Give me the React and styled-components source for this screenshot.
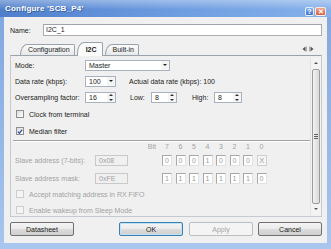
import React from "react";
import styled, { createGlobalStyle, css } from "styled-components";

const GlobalStyle = createGlobalStyle`
  html, body {
    margin: 0;
    padding: 0;
    width: 331px;
    height: 249px;
    overflow: hidden;
  }
  body {
    font-family: "Liberation Sans", Arial, sans-serif;
    font-size: 7px;
    color: #1c1c1c;
  }
`;

const BIT_NUMBERS = ["7", "6", "5", "4", "3", "2", "1", "0"];
const ADDRESS_BITS = ["0", "0", "0", "1", "0", "0", "0", "X"];
const MASK_BITS = ["1", "1", "1", "1", "1", "1", "1", "0"];

const CheckMark = () => (
  <svg width="7" height="7" viewBox="0 0 7 7">
    <path d="M1 3.6 L2.8 5.5 L6 1.2" fill="none" stroke="#2c4f9e" strokeWidth="1.4" />
  </svg>
);

const TabArrows = () => (
  <svg width="12" height="6" viewBox="0 0 12 6">
    <path d="M0.5 3 L3.5 0.5 L3.5 5.5 Z" fill="#555" />
    <rect x="4" y="0.5" width="0.8" height="5" fill="#999" />
    <path d="M11.5 3 L8.5 0.5 L8.5 5.5 Z" fill="#555" />
    <rect x="7.2" y="0.5" width="0.8" height="5" fill="#999" />
  </svg>
);

const Checkbox = ({ checked, disabled, children, mt }) => (
  <CheckRow $mt={mt} $disabled={disabled}>
    <Box $disabled={disabled}>{checked && <CheckMark />}</Box>
    {children}
  </CheckRow>
);

const BitCells = ({ values, header }) => (
  <Bits>
    {values.map((v, i) =>
      header ? (
        <BitNumber key={i}>{v}</BitNumber>
      ) : (
        <BitCell key={i} $muted={v === "X"}>
          {v}
        </BitCell>
      )
    )}
  </Bits>
);

const App = () => {
  return (
    <>
      <GlobalStyle />
      <Window>
        <TitleBar>
          <Title>Configure 'SCB_P4'</Title>
          <CaptionButtons>
            <CaptionButton>?</CaptionButton>
            <CaptionButton $close>✕</CaptionButton>
          </CaptionButtons>
        </TitleBar>
        <Frame>
          <Body>
            <NameRow>
              <NameLabel>Name:</NameLabel>
              <TextBox>I2C_1</TextBox>
            </NameRow>

            <TabStrip>
              <Tab>Configuration</Tab>
              <Tab $active>I2C</Tab>
              <Tab>Built-in</Tab>
              <TabScroll>
                <TabArrows />
              </TabScroll>
            </TabStrip>

            <Panel>
              <PanelContent>
                <FieldRow>
                  <FieldLabel>Mode:</FieldLabel>
                  <Select $width={85}>
                    Master
                    <DropButton />
                  </Select>
                </FieldRow>
                <FieldRow $mt={5}>
                  <FieldLabel>Data rate (kbps):</FieldLabel>
                  <Select $width={31}>
                    100
                    <DropButton />
                  </Select>
                  <InlineText $ml={13}>Actual data rate (kbps): 100</InlineText>
                </FieldRow>
                <FieldRow $mt={5}>
                  <FieldLabel>Oversampling factor:</FieldLabel>
                  <Spin $width={31}>
                    16
                    <SpinButtons />
                  </Spin>
                  <InlineText $ml={14} $width={21}>
                    Low:
                  </InlineText>
                  <Spin $width={26}>
                    8
                    <SpinButtons />
                  </Spin>
                  <InlineText $ml={15} $width={22}>
                    High:
                  </InlineText>
                  <Spin $width={28}>
                    8
                    <SpinButtons />
                  </Spin>
                </FieldRow>

                <Checkbox mt={7}>Clock from terminal</Checkbox>
                <Checkbox mt={9} checked>
                  Median filter
                </Checkbox>

                <Separator />

                <BitHeader>
                  <BitCaption>Bit</BitCaption>
                  <BitCells values={BIT_NUMBERS} header />
                </BitHeader>
                <BitRow $mt={5}>
                  <DisabledLabel>Slave address (7-bits):</DisabledLabel>
                  <DisabledInput>0x08</DisabledInput>
                  <BitCells values={ADDRESS_BITS} />
                </BitRow>
                <BitRow $mt={7}>
                  <DisabledLabel>Slave address mask:</DisabledLabel>
                  <DisabledInput>0xFE</DisabledInput>
                  <BitCells values={MASK_BITS} />
                </BitRow>

                <Checkbox mt={6} disabled>
                  Accept matching address in RX FIFO
                </Checkbox>
                <Checkbox mt={8} disabled>
                  Enable wakeup from Sleep Mode
                </Checkbox>
              </PanelContent>

              <ScrollBar>
                <ScrollArrow $up />
                <ScrollThumb>
                  <Grip />
                </ScrollThumb>
                <ScrollArrow />
              </ScrollBar>
            </Panel>

            <ButtonRow>
              <Button>Datasheet</Button>
              <Spacer />
              <Button $default>OK</Button>
              <Button disabled>Apply</Button>
              <Button>Cancel</Button>
            </ButtonRow>
          </Body>
        </Frame>
      </Window>
    </>
  );
};

const Window = styled.div`
  width: 331px;
  height: 249px;
  display: flex;
  flex-direction: column;
  background: linear-gradient(to bottom, #7ea6df, #a8c6ee);
`;

const TitleBar = styled.div`
  height: 17px;
  flex: none;
  display: flex;
  justify-content: space-between;
  padding: 0 5px 0 5px;
  background: linear-gradient(
      to bottom,
      rgba(255, 255, 255, 0.35) 0%,
      rgba(255, 255, 255, 0.08) 45%,
      rgba(0, 0, 0, 0) 55%
    ),
    linear-gradient(to right, #4f7fcb 0%, #6c9be0 50%, #86b1ea 100%);
`;

const Title = styled.div`
  font-size: 8px;
  font-weight: bold;
  color: #fff;
  line-height: 17px;
  letter-spacing: 0.2px;
  text-shadow: 1px 1px 0 rgba(20, 40, 90, 0.45);
`;

const CaptionButtons = styled.div`
  display: flex;
  align-items: flex-end;
  gap: 1px;
  padding-bottom: 1px;
`;

const CaptionButton = styled.div`
  width: ${p => (p.$close ? 11 : 9)}px;
  height: 9px;
  box-sizing: border-box;
  border: 1px solid rgba(255, 255, 255, 0.85);
  border-radius: 2px;
  display: flex;
  align-items: center;
  justify-content: center;
  color: #fff;
  font-size: 7px;
  font-weight: bold;
  background: ${p =>
    p.$close
      ? "linear-gradient(to bottom, #f0a892, #d65a3d)"
      : "linear-gradient(to bottom, #8cb6f0, #3d72cf)"};
`;

const Frame = styled.div`
  flex: 1;
  display: flex;
  padding: 0 4px 6px 4px;
`;

const Body = styled.div`
  flex: 1;
  display: flex;
  flex-direction: column;
  background: #f0f0f0;
  padding: 7px 5px 7px 6px;
`;

const NameRow = styled.div`
  display: flex;
  align-items: center;
  height: 12px;
`;

const NameLabel = styled.div`
  width: 33px;
`;

const TextBox = styled.div`
  flex: 1;
  height: 12px;
  box-sizing: border-box;
  border: 1px solid #abadb3;
  border-top-color: #9ea3ab;
  background: #fff;
  padding-left: 2px;
  line-height: 10px;
`;

const TabStrip = styled.div`
  margin-top: 6px;
  height: 13px;
  display: flex;
  align-items: flex-end;
  padding-left: 10px;
  gap: 2px;
`;

const Tab = styled.div`
  height: 11px;
  box-sizing: border-box;
  border: 1px solid #9aa3ab;
  border-bottom: none;
  border-radius: 7px 2px 0 0 / 11px 2px 0 0;
  padding: 0 4px 0 7px;
  line-height: 10px;
  background: linear-gradient(to bottom, #fbfbfb, #e7e8ea);
  ${p =>
    p.$active &&
    css`
      height: 14px;
      margin-bottom: -1px;
      background: #fbfbfb;
      font-weight: bold;
      line-height: 13px;
      padding: 0 5px 0 8px;
      position: relative;
      z-index: 1;
    `}
`;

const TabScroll = styled.div`
  margin-left: auto;
  margin-right: 8px;
  align-self: center;
  display: flex;
`;

const Panel = styled.div`
  height: 162px;
  box-sizing: border-box;
  display: flex;
  border: 1px solid #c4cad0;
  border-top-color: #9aa3ab;
  background: #f0f0f0;
`;

const PanelContent = styled.div`
  flex: 1;
  display: flex;
  flex-direction: column;
  padding: 4px 0 0 4px;
`;

const FieldRow = styled.div`
  display: flex;
  align-items: center;
  height: 11px;
  margin-top: ${p => p.$mt || 0}px;
`;

const FieldLabel = styled.div`
  width: 70px;
  flex: none;
`;

const InlineText = styled.div`
  margin-left: ${p => p.$ml}px;
  width: ${p => (p.$width ? `${p.$width}px` : "auto")};
  white-space: nowrap;
`;

const fieldBox = css`
  position: relative;
  width: ${p => p.$width}px;
  height: 11px;
  box-sizing: border-box;
  border: 1px solid #a9b3bf;
  background: #fff;
  padding-left: 3px;
  line-height: 9px;
`;

const Select = styled.div`
  ${fieldBox}
`;

const Spin = styled.div`
  ${fieldBox}
`;

const DropButton = styled.span`
  position: absolute;
  right: 0;
  top: 0;
  bottom: 0;
  width: 8px;
  background: #f4f4f4;
  &::after {
    content: "";
    position: absolute;
    left: 2px;
    top: 3px;
    border-left: 2px solid transparent;
    border-right: 2px solid transparent;
    border-top: 2px solid #222;
  }
`;

const SpinButtons = styled.span`
  position: absolute;
  right: 0;
  top: 0;
  bottom: 0;
  width: 8px;
  background: #f4f4f4;
  &::before,
  &::after {
    content: "";
    position: absolute;
    left: 2px;
    border-left: 2px solid transparent;
    border-right: 2px solid transparent;
  }
  &::before {
    top: 1px;
    border-bottom: 2px solid #333;
  }
  &::after {
    bottom: 1px;
    border-top: 2px solid #333;
  }
`;

const CheckRow = styled.div`
  display: flex;
  align-items: center;
  gap: 5px;
  height: 8px;
  margin-top: ${p => p.$mt}px;
  padding-left: 1px;
  color: ${p => (p.$disabled ? "#a2a2a2" : "inherit")};
`;

const Box = styled.span`
  width: 8px;
  height: 8px;
  box-sizing: border-box;
  border: 1px solid ${p => (p.$disabled ? "#cdcdcd" : "#8e8f8f")};
  background: ${p =>
    p.$disabled ? "#f4f4f4" : "linear-gradient(135deg, #dcdcdc, #ffffff)"};
  display: flex;
  align-items: center;
  justify-content: center;
`;

const Separator = styled.div`
  margin: 5px 0 0 -2px;
  height: 0;
  border-top: 1px solid #a0a0a0;
  border-bottom: 1px solid #ffffff;
`;

const BitHeader = styled.div`
  display: flex;
  align-items: center;
  height: 8px;
  color: #a2a2a2;
`;

const BitCaption = styled.div`
  width: 147px;
  box-sizing: border-box;
  text-align: right;
  padding-right: 6px;
`;

const BitRow = styled.div`
  display: flex;
  align-items: center;
  height: 11px;
  margin-top: ${p => p.$mt}px;
`;

const DisabledLabel = styled.div`
  width: 80px;
  color: #a2a2a2;
`;

const DisabledInput = styled.div`
  width: 33px;
  height: 11px;
  box-sizing: border-box;
  border: 1px solid #c9c9c9;
  color: #a2a2a2;
  padding-left: 3px;
  line-height: 9px;
  margin-right: 34px;
`;

const Bits = styled.div`
  display: flex;
  gap: 3.5px;
`;

const BitNumber = styled.div`
  width: 10px;
  text-align: center;
`;

const BitCell = styled.div`
  width: 10px;
  height: 11px;
  box-sizing: border-box;
  border: 1px solid #e2e2e2;
  border-top-color: #a8a8a8;
  border-left-color: #a8a8a8;
  background: #fff;
  color: #9d9d9d;
  padding-left: 2px;
  line-height: 9px;
  ${p =>
    p.$muted &&
    css`
      border-color: #cfcfcf;
      background: #f6f6f6;
    `}
`;

const ScrollBar = styled.div`
  width: 10px;
  flex: none;
  margin: 2px 0 1px 0;
  display: flex;
  flex-direction: column;
  background: #f3f3f3;
  border-left: 1px solid #e4e4e4;
`;

const ScrollArrow = styled.div`
  height: 11px;
  position: relative;
  &::after {
    content: "";
    position: absolute;
    left: 3px;
    top: 4px;
    border-left: 2px solid transparent;
    border-right: 2px solid transparent;
    ${p =>
      p.$up
        ? "border-bottom: 2px solid #555;"
        : "border-top: 2px solid #555;"}
  }
`;

const ScrollThumb = styled.div`
  flex: 1;
  margin: 0 1px;
  border: 1px solid #9c9c9c;
  border-radius: 2px;
  background: linear-gradient(to right, #f2f2f2, #dadada);
  display: flex;
  align-items: center;
  justify-content: center;
`;

const Grip = styled.div`
  width: 4px;
  height: 5px;
  background: repeating-linear-gradient(
    to bottom,
    #5f5f5f 0,
    #5f5f5f 1px,
    transparent 1px,
    transparent 2px
  );
`;

const ButtonRow = styled.div`
  margin-top: 5px;
  height: 14px;
  display: flex;
  gap: 5px;
`;

const Spacer = styled.div`
  flex: 1;
`;

const Button = styled.button`
  width: 64px;
  height: 14px;
  padding: 0;
  font-family: inherit;
  font-size: 7px;
  color: #1c1c1c;
  border: 1px solid #707070;
  border-radius: 2px;
  background: linear-gradient(to bottom, #f4f4f4 0%, #ebebeb 50%, #dddddd 51%, #cfcfcf 100%);
  ${p =>
    p.$default &&
    css`
      border-color: #3c7fb1;
      box-shadow: inset 0 0 0 1px #bfe4f8;
      margin-right: 1px;
    `}
  &:disabled {
    color: #a5a5a5;
    border-color: #b9bec2;
    background: #f4f4f4;
  }
`;

export default App;
